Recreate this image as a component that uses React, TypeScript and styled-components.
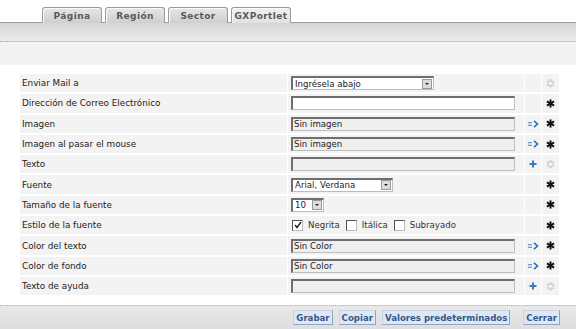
import styled, { createGlobalStyle } from 'styled-components';

const GlobalStyle = createGlobalStyle`
    html, body {
        margin: 0;
        padding: 0;
        background: #fff;
    }
    body {
        font-family: "DejaVu Sans", Verdana, sans-serif;
    }
`;

const Page = styled.div`
    width: 576px;
    height: 329px;
    display: flex;
    flex-direction: column;
    overflow: hidden;
`;

const TabStrip = styled.div`
    height: 22px;
    display: flex;
    align-items: flex-end;
    gap: 3px;
    padding-left: 42px;
    position: relative;
    z-index: 1;
`;

const Tab = styled.div<{ $active?: boolean }>`
    width: 58px;
    height: 15px;
    margin-bottom: -1px;
    border: 1px solid #9a9a9a;
    border-bottom: none;
    border-radius: 3px 3px 0 0;
    background: ${p => p.$active
        ? 'linear-gradient(#f0f0f0, #e2e2e2)'
        : 'linear-gradient(#e6e6e6, #cfcfcf)'};
    color: #5a5a5a;
    font-weight: bold;
    font-size: 9px;
    letter-spacing: 0.4px;
    display: flex;
    align-items: center;
    justify-content: center;
    box-shadow: inset 1px 1px 0 #fafafa;
`;

const HeaderBar = styled.div`
    height: 18px;
    border-top: 1px solid #9c9c9c;
    border-bottom: 1px dotted #b4b4b4;
    background: linear-gradient(#d6d6d6, #ececec);
`;

const SubBar = styled.div`
    height: 23px;
    background: #f3f3f3;
`;

const Content = styled.div`
    flex: 1;
    padding: 9px 19px 0 20px;
`;

const Table = styled.div`
    display: grid;
    grid-template-columns: 267px 236px 16px 17px;
    column-gap: 1px;
`;

const Cell = styled.div<{ $center?: boolean }>`
    height: 18.3px;
    border-bottom: 2px solid #fff;
    background: #f3f3f3;
    display: flex;
    align-items: center;
    justify-content: ${p => (p.$center ? 'center' : 'flex-start')};
    font-size: 8.8px;
    color: #222;
`;

const Label = styled(Cell)`
    padding-left: 2px;
`;

const Field = styled(Cell)`
    padding-left: 3px;
`;

const TextBox = styled.div<{ $filled?: boolean }>`
    width: 220px;
    height: 11px;
    border: 1px solid #bdbdbd;
    border-top: 2px solid #6e6e6e;
    border-left: 2px solid #6e6e6e;
    background: ${p => (p.$filled ? '#efefef' : '#fff')};
    font-size: 8.6px;
    line-height: 11px;
    padding-left: 1px;
    color: #222;
`;

const Select = styled.div<{ $width: number }>`
    width: ${p => p.$width}px;
    height: 11px;
    border: 1px solid #bdbdbd;
    border-top: 2px solid #6e6e6e;
    border-left: 2px solid #6e6e6e;
    background: #fff;
    display: flex;
    align-items: center;
    justify-content: space-between;
    font-size: 8.6px;
    padding-left: 2px;
    color: #222;
`;

const SelectArrow = styled.span`
    width: 10px;
    height: 10px;
    margin-right: 1px;
    background: #dcdcdc;
    border: 1px solid #9a9a9a;
    box-sizing: border-box;
    display: flex;
    align-items: center;
    justify-content: center;
    &::after {
        content: '';
        border-left: 2px solid transparent;
        border-right: 2px solid transparent;
        border-top: 2px solid #222;
    }
`;

const Checks = styled.div`
    display: flex;
    align-items: center;
    gap: 5px;
    font-size: 8.6px;
    color: #333;
`;

const CheckBox = styled.span`
    width: 9px;
    height: 9px;
    border: 1px solid #bbb;
    border-top-color: #555;
    border-left-color: #555;
    background: #fff;
    display: inline-flex;
    align-items: center;
    justify-content: center;
    margin-left: 1px;
`;

const Footer = styled.div`
    height: 23px;
    border-top: 1px dotted #b4b4b4;
    background: linear-gradient(#e9e9e9, #dedede);
    display: flex;
    align-items: center;
    justify-content: flex-end;
    gap: 6px;
    padding-right: 16px;
`;

const Button = styled.button<{ $gap?: number }>`
    height: 15px;
    padding: 0 2px;
    margin-left: ${p => p.$gap ?? 0}px;
    border: 1px solid #c6d4e4;
    border-right-color: #8ea6c4;
    border-bottom-color: #8ea6c4;
    background: #dfe8f2;
    color: #32598c;
    font-family: "DejaVu Sans", Verdana, sans-serif;
    font-weight: bold;
    font-size: 8.6px;
    cursor: pointer;
`;

const Star = ({ solid }: { solid: boolean }) => (
    <svg width="9" height="9" viewBox="0 0 10 10">
        {solid ? (
            <g stroke="#111" strokeWidth="2.2" strokeLinecap="butt">
                <line x1="5" y1="0.5" x2="5" y2="9.5" />
                <line x1="1" y1="2.7" x2="9" y2="7.3" />
                <line x1="1" y1="7.3" x2="9" y2="2.7" />
            </g>
        ) : (
            <path
                d="M4.2 0.8h1.6v2.6l2.2-1.3 0.8 1.4-2.2 1.3 2.2 1.3-0.8 1.4-2.2-1.3v2.6h-1.6v-2.6l-2.2 1.3-0.8-1.4 2.2-1.3-2.2-1.3 0.8-1.4 2.2 1.3z"
                fill="#fff"
                stroke="#b0b0b0"
                strokeWidth="0.7"
            />
        )}
    </svg>
);

const ArrowIcon = () => (
    <svg width="11" height="8" viewBox="0 0 11 8">
        <rect x="0" y="2" width="4" height="1.3" fill="#6b9bd1" />
        <rect x="0" y="4.7" width="4" height="1.3" fill="#6b9bd1" />
        <path d="M6 0.8 L9.5 4 L6 7.2" fill="none" stroke="#2f6db3" strokeWidth="1.6" />
    </svg>
);

const PlusIcon = () => (
    <svg width="8" height="8" viewBox="0 0 8 8">
        <rect x="3" y="0.5" width="2" height="7" fill="#3e78bd" />
        <rect x="0.5" y="3" width="7" height="2" fill="#3e78bd" />
    </svg>
);

type Row = {
    label: string;
    kind: 'text' | 'select' | 'checks';
    value?: string;
    filled?: boolean;
    width?: number;
    icon?: 'arrow' | 'plus';
    required: boolean;
};

const rows: Row[] = [
    { label: 'Enviar Mail a', kind: 'select', value: 'Ingrésela abajo', width: 138, required: false },
    { label: 'Dirección de Correo Electrónico', kind: 'text', value: '', required: true },
    { label: 'Imagen', kind: 'text', value: 'Sin imagen', filled: true, icon: 'arrow', required: true },
    { label: 'Imagen al pasar el mouse', kind: 'text', value: 'Sin imagen', filled: true, icon: 'arrow', required: true },
    { label: 'Texto', kind: 'text', value: '', filled: true, icon: 'plus', required: false },
    { label: 'Fuente', kind: 'select', value: 'Arial, Verdana', width: 97, required: true },
    { label: 'Tamaño de la fuente', kind: 'select', value: '10', width: 28, required: true },
    { label: 'Estilo de la fuente', kind: 'checks', required: true },
    { label: 'Color del texto', kind: 'text', value: 'Sin Color', filled: true, icon: 'arrow', required: true },
    { label: 'Color de fondo', kind: 'text', value: 'Sin Color', filled: true, icon: 'arrow', required: true },
    { label: 'Texto de ayuda', kind: 'text', value: '', filled: true, icon: 'plus', required: false },
];

const renderField = (row: Row) => {
    if (row.kind === 'select') {
        return (
            <Select $width={row.width ?? 100}>
                {row.value}
                <SelectArrow />
            </Select>
        );
    }
    if (row.kind === 'checks') {
        return (
            <Checks>
                <CheckBox>
                    <svg width="8" height="8" viewBox="0 0 8 8">
                        <path d="M1 4 L3 6.5 L7 1" fill="none" stroke="#222" strokeWidth="1.4" />
                    </svg>
                </CheckBox>
                Negrita
                <CheckBox />
                Itálica
                <CheckBox />
                Subrayado
            </Checks>
        );
    }
    return <TextBox $filled={row.filled}>{row.value}</TextBox>;
};

const App = () => {
    return (
        <Page>
            <GlobalStyle />
            <TabStrip>
                <Tab>Página</Tab>
                <Tab>Región</Tab>
                <Tab>Sector</Tab>
                <Tab $active>GXPortlet</Tab>
            </TabStrip>
            <HeaderBar />
            <SubBar />
            <Content>
                <Table>
                    {rows.map(row => (
                        <>
                            <Label key={row.label}>{row.label}</Label>
                            <Field>{renderField(row)}</Field>
                            <Cell $center>
                                {row.icon === 'arrow' && <ArrowIcon />}
                                {row.icon === 'plus' && <PlusIcon />}
                            </Cell>
                            <Cell $center>
                                <Star solid={row.required} />
                            </Cell>
                        </>
                    ))}
                </Table>
            </Content>
            <Footer>
                <Button>Grabar</Button>
                <Button>Copiar</Button>
                <Button>Valores predeterminados</Button>
                <Button $gap={7}>Cerrar</Button>
            </Footer>
        </Page>
    );
};

export default App;
